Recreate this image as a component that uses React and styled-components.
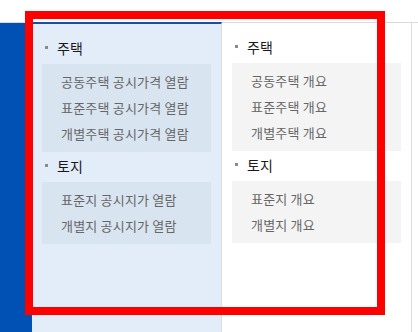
import React from "react";
import styled, { createGlobalStyle } from "styled-components";

const GlobalStyle = createGlobalStyle`
  html, body {
    margin:0;
    padding:0;
    background:#fff;
  }
  body {
    font-family:"Noto Sans CJK KR", "Noto Sans", sans-serif;
  }
`;

const Page = styled.div`
  position:relative;
  width:418px;
  height:332px;
  overflow:hidden;
  padding-top:22px;
  box-sizing:border-box;
`;

const MenuArea = styled.div`
  display:flex;
  height:100%;
  border-top:1px solid #d9d9d9;
  box-sizing:border-box;
`;

const SideBar = styled.div`
  width:32px;
  flex:none;
  background:#0151b5;
`;

const Column = styled.div`
  width:169px;
  flex:none;
  padding:14px 10px 0;
  background:${p => (p.$active ? "#e3edf9" : "#fff")};
  border-right:1px solid #dcdcdc;
  border-top:${p => (p.$active ? "2px solid #1f4c9c" : "none")};
  margin-top:${p => (p.$active ? "-1px" : "0")};
`;

const Group = styled.div`
  & + & {
    margin-top:4px;
  }
`;

const Heading = styled.div`
  display:flex;
  align-items:center;
  height:20px;
  padding-left:3px;
  font-size:14px;
  font-weight:400;
  color:#1a1a1a;
  margin-bottom:6px;
  &::before {
    content:"";
    width:3px;
    height:3px;
    background:#8a8a8a;
    margin-right:9px;
    margin-top:-2px;
  }
`;

const SubList = styled.ul`
  list-style:none;
  margin:0;
  padding:5px 0 5px 19px;
  background:${p => (p.$active ? "#d9e4f1" : "#f4f4f4")};
`;

const SubItem = styled.li`
  font-size:13px;
  line-height:26px;
  color:#666;
  letter-spacing:0.2px;
`;

const Highlight = styled.div`
  position:absolute;
  left:25px;
  top:11px;
  width:360px;
  height:304px;
  border:8px solid #ff0000;
  box-sizing:border-box;
  pointer-events:none;
`;

const columns = [
  {
    active:true,
    groups:[
      { title:"주택", items:["공동주택 공시가격 열람", "표준주택 공시가격 열람", "개별주택 공시가격 열람"] },
      { title:"토지", items:["표준지 공시지가 열람", "개별지 공시지가 열람"] },
    ],
  },
  {
    active:false,
    groups:[
      { title:"주택", items:["공동주택 개요", "표준주택 개요", "개별주택 개요"] },
      { title:"토지", items:["표준지 개요", "개별지 개요"] },
    ],
  },
];

export default function App(){
  return <>
    <GlobalStyle/>
    <Page>
      <MenuArea>
        <SideBar/>
        {columns.map((col, i) => (
          <Column key={i} $active={col.active}>
            {col.groups.map(g => (
              <Group key={g.title}>
                <Heading>{g.title}</Heading>
                <SubList $active={col.active}>
                  {g.items.map(it => <SubItem key={it}>{it}</SubItem>)}
                </SubList>
              </Group>
            ))}
          </Column>
        ))}
      </MenuArea>
      <Highlight/>
    </Page>
  </>;
}
